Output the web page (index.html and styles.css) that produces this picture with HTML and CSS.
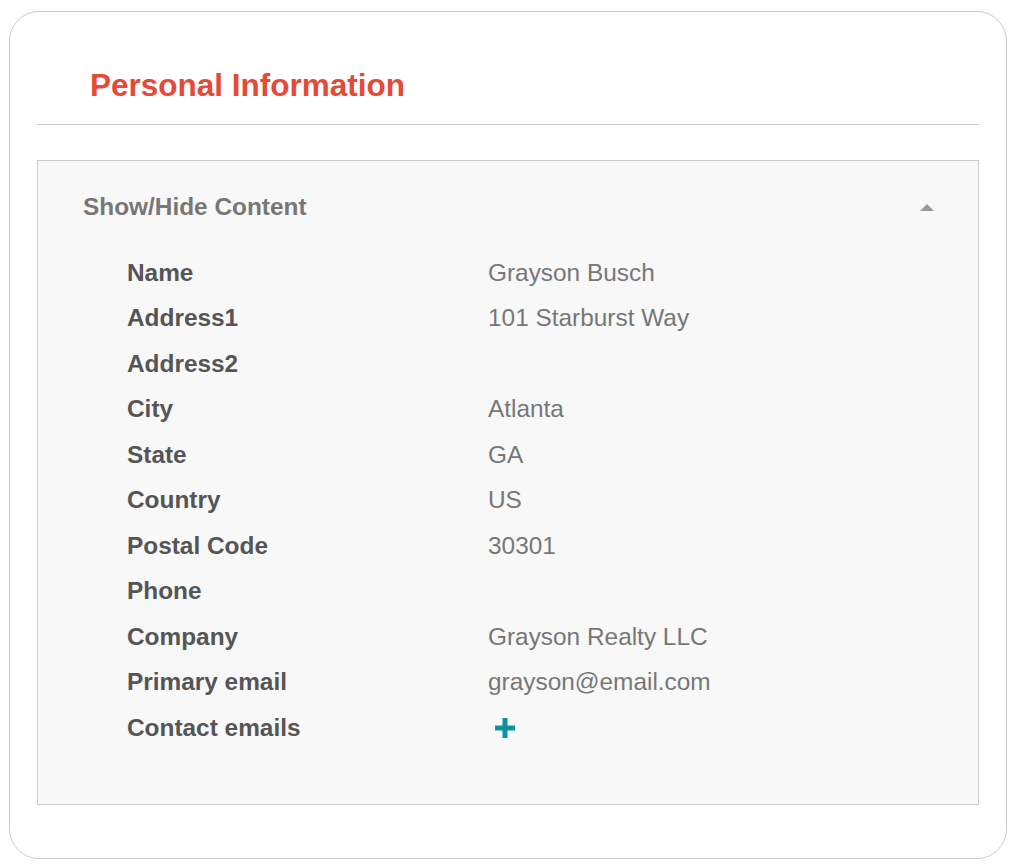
FILE: index.html
```html
<!DOCTYPE html>
<html lang="en">
<head>
<meta charset="utf-8">
<title>Personal Information</title>
<link rel="stylesheet" href="styles.css">
</head>
<body>
<div class="card">
  <div class="card-header">
    <h1 class="title">Personal Information</h1>
  </div>
  <section class="panel">
    <div class="panel-head">
      <span class="panel-title">Show/Hide Content</span>
      <span class="caret"></span>
    </div>
    <dl class="info">
      <div class="row"><dt>Name</dt><dd>Grayson Busch</dd></div>
      <div class="row"><dt>Address1</dt><dd>101 Starburst Way</dd></div>
      <div class="row"><dt>Address2</dt><dd></dd></div>
      <div class="row"><dt>City</dt><dd>Atlanta</dd></div>
      <div class="row"><dt>State</dt><dd>GA</dd></div>
      <div class="row"><dt>Country</dt><dd>US</dd></div>
      <div class="row"><dt>Postal Code</dt><dd>30301</dd></div>
      <div class="row"><dt>Phone</dt><dd></dd></div>
      <div class="row"><dt>Company</dt><dd>Grayson Realty LLC</dd></div>
      <div class="row"><dt>Primary email</dt><dd>grayson@email.com</dd></div>
      <div class="row"><dt>Contact emails</dt><dd><span class="plus" aria-label="Add"><svg width="20" height="20" viewBox="0 0 20 20"><path d="M7.5 0h5v7.5H20v5h-7.5V20h-5v-7.5H0v-5h7.5z" fill="#0c929e"/></svg></span></dd></div>
    </dl>
  </section>
</div>
</body>
</html>
```
FILE: styles.css
```css
html, body {
  margin: 0;
  background: #fff;
}
body {
  padding: 11px 7px 8px 9px;
  font-family: "Liberation Sans", Arial, sans-serif;
}
.card {
  border: 1px solid #cccccc;
  border-radius: 30px;
  padding: 0 27px 53px;
  background: #fff;
}
.card-header {
  padding: 55px 0 21px 53px;
  border-bottom: 1px solid #cccccc;
}
.title {
  margin: 0;
  font-size: 31.5px;
  line-height: 36px;
  font-weight: bold;
  color: #e44a35;
}
.panel {
  margin-top: 35px;
  background: #f8f8f8;
  border: 1px solid #cccccc;
  padding: 32px 44px 53px 45px;
}
.panel-head {
  display: flex;
  justify-content: space-between;
  align-items: center;
  height: 28px;
}
.panel-title {
  font-size: 24.4px;
  line-height: 28px;
  font-weight: bold;
  color: #777777;
}
.caret {
  width: 0;
  height: 0;
  border-left: 7px solid transparent;
  border-right: 7px solid transparent;
  border-bottom: 7px solid #999999;
}
.info {
  margin: 29px 0 0 44px;
}
.row {
  display: flex;
  height: 45.5px;
  align-items: center;
}
.row dt {
  width: 361px;
  flex: none;
  font-size: 24.4px;
  font-weight: bold;
  color: #555555;
}
.row dd {
  margin: 0;
  font-size: 24.4px;
  color: #777777;
}
.plus {
  display: flex;
  margin-left: 7px;
}
```
